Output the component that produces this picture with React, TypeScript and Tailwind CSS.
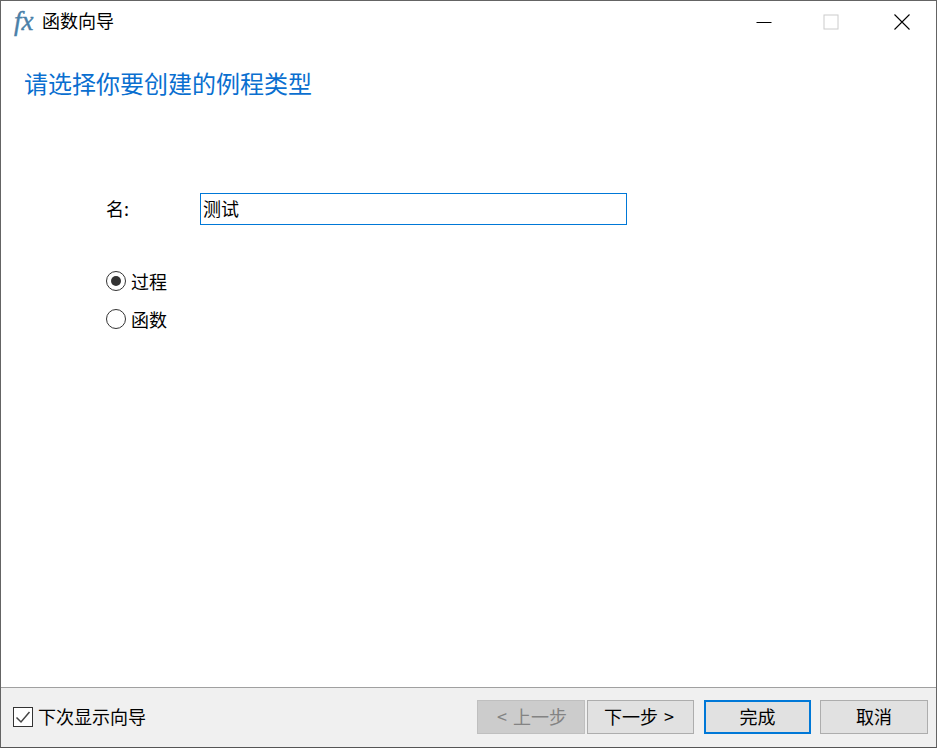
import React from "react";

const font = "font-['Noto_Sans_CJK_SC','Liberation_Sans',sans-serif]";

function Btn({ label, kind, extra = "" }: { label: string; kind?: "disabled" | "default"; extra?: string }) {
  const cls =
    kind === "disabled"
      ? "border border-[#bfbfbf] bg-[#cccccc] text-[#838383]"
      : kind === "default"
        ? "border-2 border-[#0078d7] bg-[#e1e1e1] text-black"
        : "border border-[#adadad] bg-[#e1e1e1] text-black";
  return (
    <div className={`flex h-[34px] w-full items-center justify-center pb-[2px] text-[18px] leading-none [word-spacing:2px] ${cls} ${extra}`}>
      {label}
    </div>
  );
}

function Radio({ checked, label }: { checked?: boolean; label: string }) {
  return (
    <div className="flex h-5 items-center">
      <span className="flex h-5 w-5 items-center justify-center rounded-full border border-[#333333] bg-white">
        {checked && <span className="h-[10px] w-[10px] rounded-full bg-[#333333]" />}
      </span>
      <span className="ml-[5px] text-[18px] leading-none text-black">{label}</span>
    </div>
  );
}

export default function App() {
  return (
    <div className={`flex h-[748px] w-[937px] flex-col overflow-hidden border border-[#646464] border-b-[#555555] bg-white ${font}`}>
      <div className="flex h-[44px] shrink-0 items-center pb-[2px]">
        <span className="ml-[13px] w-[28px] pb-[1px] font-['Liberation_Serif',serif] text-[27px] italic leading-none text-[#4a80a8] [-webkit-text-stroke:0.4px_#4a80a8]">
          fx
        </span>
        <span className="pb-[4px] text-[18px] leading-none text-black">函数向导</span>
        <div className="ml-auto flex items-center">
          <svg width="16" height="16" viewBox="0 0 16 16" className="mr-[52px]">
            <path d="M0.5 8.5H15.5" stroke="#000" strokeWidth="1" />
          </svg>
          <svg width="16" height="16" viewBox="0 0 16 16" className="mr-[54px] -translate-x-[1px]">
            <rect x="1" y="1" width="14" height="14" fill="none" stroke="#cccccc" strokeWidth="1" />
          </svg>
          <svg width="16" height="16" viewBox="0 0 16 16" className="mr-[26px]">
            <path d="M0.5 0.5L15.5 15.5M15.5 0.5L0.5 15.5" stroke="#000" strokeWidth="1.1" />
          </svg>
        </div>
      </div>

      <div className="flex flex-1 flex-col pl-[23px]">
        <div className="mt-[20px] text-[24px] leading-[36px] text-[#0a6fd0]">请选择你要创建的例程类型</div>

        <div className="ml-[82px] mt-[92px] flex items-center">
          <span className="w-[94px] pb-[2px] text-[18px] leading-none text-black">名:</span>
          <div className="flex h-[32px] w-[427px] items-center border border-[#0078d7] pb-[3px] pl-[2px] text-[18px] leading-none text-black">
            测试
          </div>
        </div>

        <div className="ml-[82px] mt-[46px] flex flex-col gap-[18px]">
          <Radio checked label="过程" />
          <Radio label="函数" />
        </div>
      </div>

      <div className="flex h-[60px] shrink-0 items-center border-t border-[#a0a0a0] bg-[#f0f0f0] pb-[2px] pl-3 pr-2">
        <span className="flex h-5 w-5 items-center justify-center border border-[#333333] bg-white">
          <svg width="16" height="16" viewBox="0 0 16 16">
            <path d="M1.5 8.5L6 13L14.5 3" fill="none" stroke="#444444" strokeWidth="1.5" />
          </svg>
        </span>
        <span className="ml-[5px] pb-[2px] text-[18px] leading-none text-black">下次显示向导</span>
        <div className="ml-auto flex items-center">
          <div className="w-[108px]"><Btn label="< 上一步" kind="disabled" extra="pl-[2px]" /></div>
          <div className="ml-[2px] w-[107px]"><Btn label="下一步 >" extra="pr-[3px]" /></div>
          <div className="ml-[10px] w-[107px]"><Btn label="完成" kind="default" /></div>
          <div className="ml-[9px] w-[108px]"><Btn label="取消" /></div>
        </div>
      </div>
    </div>
  );
}
